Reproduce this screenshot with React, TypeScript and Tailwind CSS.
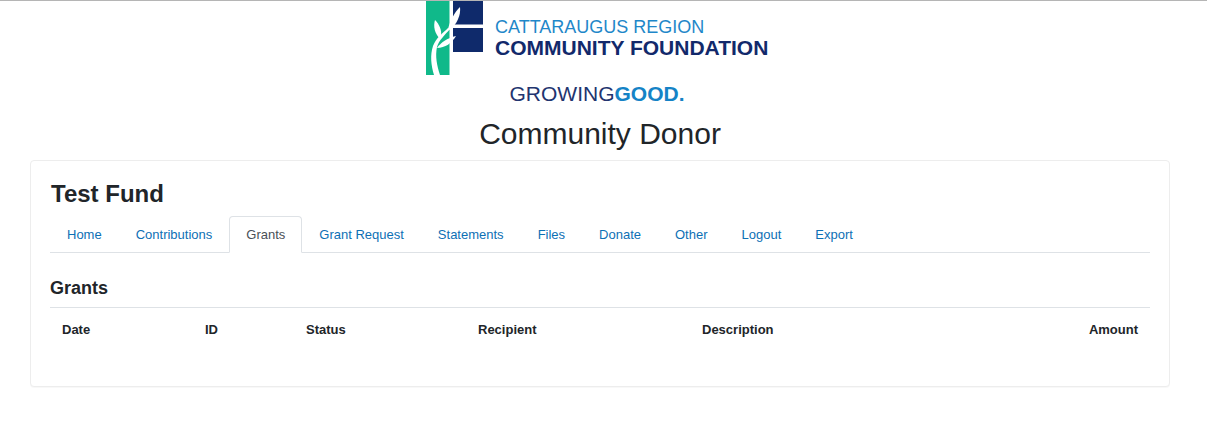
export default function App() {
  const tabs = ["Home", "Contributions", "Grants", "Grant Request", "Statements", "Files", "Donate", "Other", "Logout", "Export"];
  const sans = "font-['Liberation_Sans',Arial,sans-serif]";
  return (
    <div className={`${sans} min-h-[442px] bg-white border-t border-[#b5b5b5] text-[#212529] overflow-hidden`}>
      <div className="w-[1200px] flex flex-col items-center">
        <div className="w-[342px] h-[75px] flex mr-[6px]">
          <svg width="60" height="75" viewBox="0 0 60 75" className="shrink-0">
            <rect x="0" y="0" width="23.5" height="74" fill="#10b98a" />
            <rect x="27" y="0" width="30" height="23.5" fill="#0f2a6b" />
            <rect x="27" y="27" width="30" height="24" fill="#0f2a6b" />
            <path d="M8 74 C5 64 4 54 7 45 C10 37 17 32 22 27 L24 28 C19 34 13 39 11 46 C9 55 11 65 14 74Z" fill="#fff" />
            <path d="M13 37 C9 32 7 26 9 19 C13 23 16 29 15 35Z" fill="#fff" />
            <path d="M22 28 C24 20 28 12 34 6 C35 14 31 23 24 29Z" fill="#fff" />
            <path d="M11 47 C15 41 22 37 30 35 C26 42 19 47 11 47Z" fill="#fff" />
          </svg>
          <div className="ml-[9px] pt-[16px] flex flex-col whitespace-nowrap">
            <span className="text-[18px] leading-[20px] text-[#1f87c9]">CATTARAUGUS REGION</span>
            <span className="text-[21px] leading-[22px] font-bold text-[#12296b]">COMMUNITY FOUNDATION</span>
          </div>
        </div>
        <div className="mt-[6px] mr-[6px] h-[24px] text-[21px] leading-[24px] whitespace-nowrap text-[#22346f]">
          GROWING<span className="font-bold text-[#1583c6]">GOOD.</span>
        </div>
        <h1 className="mt-[10px] text-[30px] leading-[36px] font-normal">Community Donor</h1>
        <div className="mt-[8px] w-[1140px] h-[227px] bg-white border border-[#ededed] rounded-[4px] px-[19px] pt-[18px] shadow-[0_1px_1px_rgba(0,0,0,0.03)]">
          <h2 className="pl-[1px] text-[24px] leading-[29px] font-bold">Test Fund</h2>
          <nav className="mt-[8px] flex border-b border-[#dee2e6] h-[37px]">
            {tabs.map((t) =>
              t === "Grants" ? (
                <a key={t} className="h-[37px] px-[16px] leading-[35px] text-[13px] text-[#495057] bg-white border border-[#dee2e6] border-b-white rounded-t-[4px]">{t}</a>
              ) : (
                <a key={t} className="h-[36px] px-[17px] leading-[37px] text-[13px] text-[#0d70b5]">{t}</a>
              )
            )}
          </nav>
          <h3 className="mt-[24px] text-[18px] leading-[22px] font-bold pb-[8px] border-b border-[#dee2e6]">Grants</h3>
          <table className="w-full table-fixed text-[13px]">
            <thead>
              <tr className="font-bold text-left">
                <th className="w-[143px] pl-[12px] pt-[13px] leading-[17px]">Date</th>
                <th className="w-[101px] pl-[12px] pt-[13px] leading-[17px]">ID</th>
                <th className="w-[172px] pl-[12px] pt-[13px] leading-[17px]">Status</th>
                <th className="w-[224px] pl-[12px] pt-[13px] leading-[17px]">Recipient</th>
                <th className="pl-[12px] pt-[13px] leading-[17px]">Description</th>
                <th className="w-[120px] pr-[12px] pt-[13px] leading-[17px] text-right">Amount</th>
              </tr>
            </thead>
          </table>
        </div>
      </div>
    </div>
  );
}
